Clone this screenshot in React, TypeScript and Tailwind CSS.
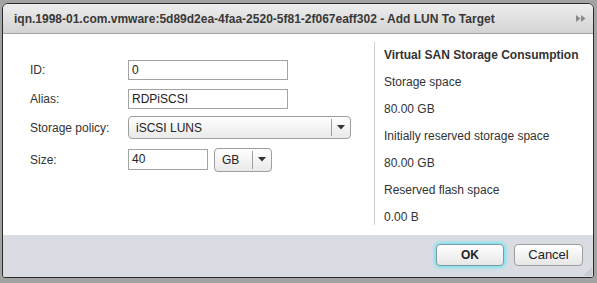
const font = { fontFamily: '"Liberation Sans", Arial, sans-serif' };

function Caret() {
  return (
    <svg width="8" height="5" viewBox="0 0 8 5" className="block">
      <path d="M0 0 H8 L4 4.5 Z" fill="#333" />
    </svg>
  );
}

function TextInput({ value, width }: { value: string; width: string }) {
  return (
    <div
      className={`${width} h-[20px] border border-[#a3a3a3] bg-white px-[3px] text-[12px] leading-[18px] text-[#222]`}
    >
      {value}
    </div>
  );
}

function DropDown({
  label,
  width,
  height,
}: {
  label: string;
  width: string;
  height: string;
}) {
  return (
    <div
      className={`${width} ${height} flex items-stretch rounded-[4px] border border-[#9e9e9e] bg-gradient-to-b from-white to-[#e9e9e9] text-[12px] text-[#222]`}
    >
      <div className="flex-1 flex items-center pl-[7px]">{label}</div>
      <div className="my-[2px] w-px bg-[#9e9e9e]" />
      <div className="w-[18px] flex items-center justify-center">
        <Caret />
      </div>
    </div>
  );
}

function Row({ label, children }: { label: string; children: React.ReactNode }) {
  return (
    <div className="h-[29px] flex items-center">
      <div className="w-[98px] text-[12px] text-[#333]">{label}</div>
      {children}
    </div>
  );
}

export default function App() {
  const info = [
    "Storage space",
    "80.00 GB",
    "Initially reserved storage space",
    "80.00 GB",
    "Reserved flash space",
    "0.00 B",
  ];

  return (
    <div className="w-[597px] h-[283px] bg-[#a3a3a3] pt-[3px] pl-[2px] overflow-hidden" style={font}>
      <div className="w-[592px] h-[275px] border border-[#2a2a2a] rounded-t-[6px] rounded-b-[3px] overflow-hidden flex flex-col bg-white">
        {/* Title bar */}
        <div className="h-[30px] shrink-0 flex items-center justify-between bg-gradient-to-b from-[#eeeeee] to-[#d3d3d3] border-b border-[#a6a6a6] pl-[11px] pr-[6px]">
          <span className="text-[12px] font-bold text-[#383838]">
            iqn.1998-01.com.vmware:5d89d2ea-4faa-2520-5f81-2f067eaff302 - Add LUN To Target
          </span>
          <svg width="10" height="7" viewBox="0 0 10 7" className="mr-[1px]">
            <path d="M0 0 L4.5 3.5 L0 7 Z M5 0 L9.5 3.5 L5 7 Z" fill="#8a8a8a" />
          </svg>
        </div>

        {/* Body */}
        <div className="h-[201px] shrink-0 flex">
          <div className="w-[371px] pl-[27px] pt-[21px] flex flex-col">
            <Row label="ID:">
              <TextInput value="0" width="w-[160px]" />
            </Row>
            <Row label="Alias:">
              <TextInput value="RDPiSCSI" width="w-[160px]" />
            </Row>
            <Row label="Storage policy:">
              <DropDown label="iSCSI LUNS" width="w-[223px]" height="h-[23px]" />
            </Row>
            <div className="mt-[3px]">
              <Row label="Size:">
                <TextInput value="40" width="w-[80px] h-[21px]" />
                <div className="ml-[6px]">
                  <DropDown label="GB" width="w-[58px]" height="h-[24px]" />
                </div>
              </Row>
            </div>
          </div>

          <div className="flex">
            <div className="w-px h-[183px] mt-[8px] bg-[#d0d0d0]" />
            <div className="pl-[9px] pt-[8px] flex flex-col text-[12px] text-[#333]">
              <div className="h-[27px] leading-[27px] font-bold">Virtual SAN Storage Consumption</div>
              {info.map((t, i) => (
                <div key={i} className="h-[27px] leading-[27px]">
                  {t}
                </div>
              ))}
            </div>
          </div>
        </div>

        {/* Footer */}
        <div className="flex-1 relative bg-[#d9dde3] flex items-center justify-end gap-[10px] pr-[10px] pb-[2px]">
          <button className="w-[68px] h-[22px] rounded-[4px] border border-[#7f9aa4] bg-gradient-to-b from-white to-[#e7e7e7] text-[12px] font-bold text-[#222] shadow-[0_0_3px_2px_#7fe3f2]">
            OK
          </button>
          <button className="w-[69px] h-[22px] rounded-[4px] border border-[#9e9e9e] bg-gradient-to-b from-white to-[#e7e7e7] text-[13px] text-[#222]">
            Cancel
          </button>
          <svg width="8" height="8" viewBox="0 0 8 8" className="absolute right-[1px] bottom-[1px]">
            {[
              [7, 1], [7, 3], [5, 3], [7, 5], [5, 5], [3, 5], [7, 7], [5, 7], [3, 7], [1, 7],
            ].map(([x, y], i) => (
              <rect key={i} x={x - 0.5} y={y - 0.5} width="1" height="1" fill="#9a9a9a" />
            ))}
          </svg>
        </div>
      </div>
    </div>
  );
}
